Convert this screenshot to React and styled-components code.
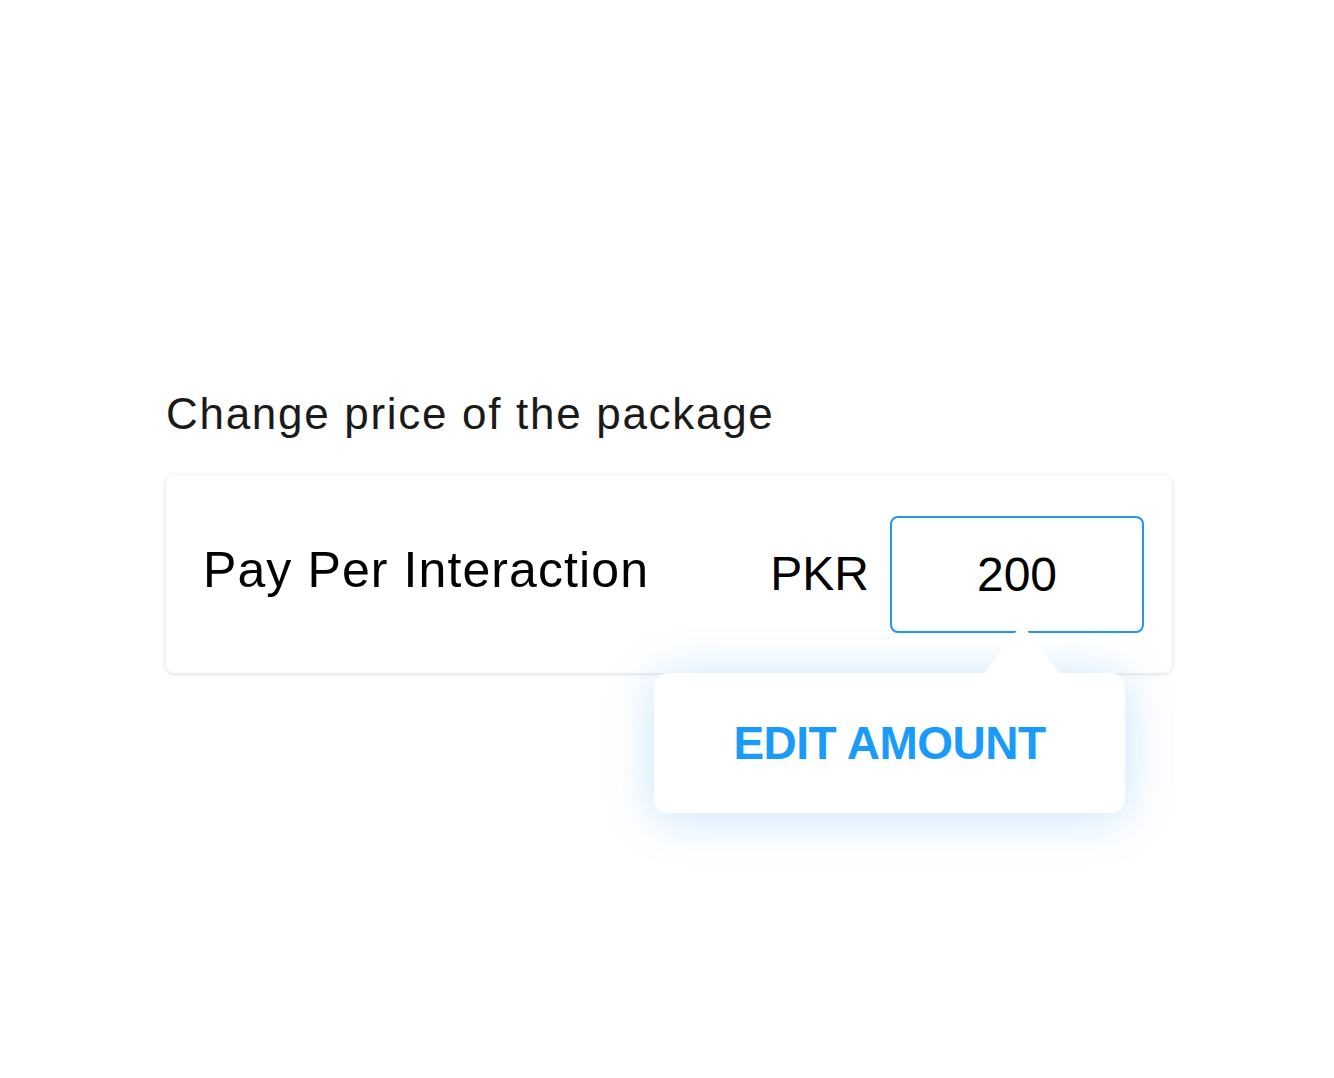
import React from 'react';
import styled, { createGlobalStyle } from 'styled-components';

const GlobalStyle = createGlobalStyle`
  body {
    margin: 0;
    background: #fff;
    font-family: "Liberation Sans", Arial, sans-serif;
    color: #000;
  }
`;

const Page = styled.div`
  min-height: 1078px;
  padding: 386px 0 0 166px;
  box-sizing: border-box;
`;

const Title = styled.h1`
  margin: 0 0 33px;
  font-size: 44px;
  font-weight: 400;
  line-height: 56px;
  letter-spacing: 1.7px;
  color: #1a1a1a;
`;

const Card = styled.div`
  position: relative;
  width: 1006px;
  height: 198px;
  box-sizing: border-box;
  background: #fff;
  border-radius: 8px;
  box-shadow: 0 1px 5px rgba(0, 0, 0, 0.14);
  display: flex;
  align-items: center;
  padding: 0 28px 0 37px;
`;

const Label = styled.div`
  flex: 1;
  font-size: 50px;
  letter-spacing: 1.1px;
  line-height: 1;
  margin-top: -8px;
`;

const Currency = styled.div`
  font-size: 48px;
  line-height: 1;
  margin-right: 21px;
`;

const AmountBox = styled.div`
  width: 254px;
  height: 117px;
  box-sizing: border-box;
  border: 2px solid #2196f3;
  border-radius: 8px;
  display: flex;
  align-items: center;
  justify-content: center;
  font-size: 48px;
  margin-top: 1px;
`;

const Tooltip = styled.div`
  position: absolute;
  top: 198px;
  left: 488px;
  width: 471px;
  height: 140px;
  background: #fff;
  border-radius: 14px;
  box-shadow: 0 4px 48px rgba(30, 150, 250, 0.26);
  display: flex;
  align-items: center;
  justify-content: center;
  font-size: 46px;
  font-weight: 700;
  color: #1a9bfc;
  letter-spacing: -0.5px;
`;

const Arrow = styled.svg`
  position: absolute;
  left: 330px;
  top: -47px;
`;

export default function App() {
  return (
    <>
      <GlobalStyle />
      <Page>
        <Title>Change price of the package</Title>
        <Card>
          <Label>Pay Per Interaction</Label>
          <Currency>PKR</Currency>
          <AmountBox>200</AmountBox>
          <Tooltip>
            <Arrow width="76" height="48" viewBox="0 0 76 48">
              <path d="M0 48 L34 3 Q38 -1 42 3 L76 48 Z" fill="#fff" />
            </Arrow>
            EDIT AMOUNT
          </Tooltip>
        </Card>
      </Page>
    </>
  );
}
